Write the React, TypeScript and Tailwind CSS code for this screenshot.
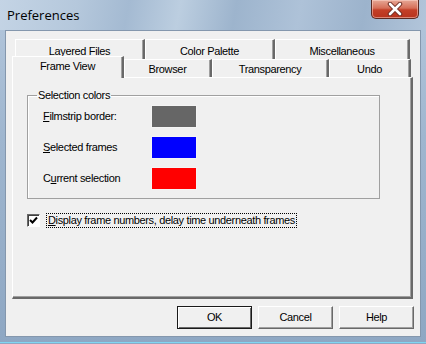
import React from 'react';

const tabBase = 'flex justify-center bg-[#f0f0f0] border-t border-l border-t-white border-l-white border-r-2 border-r-[#696969] shadow-[inset_-1px_0_0_#a0a0a0] text-[11px] tracking-[-0.35px] text-black';

const topTabs = [
  { label: 'Layered Files', w: 'w-[130px]' },
  { label: 'Color Palette', w: 'w-[130px]' },
  { label: 'Miscellaneous', w: 'w-[135px]' }
];

const lowerTabs = [
  { label: 'Browser', w: 'w-[88px]' },
  { label: 'Transparency', w: 'w-[117px]' },
  { label: 'Undo', w: 'w-[82px]' }
];

const colorRows = [
  { key: 'F', rest: 'ilmstrip border:', color: 'bg-[#666666]' },
  { key: 'S', rest: 'elected frames', color: 'bg-[#0000ff]' },
  { key: 'C', rest: 'urrent selection', color: 'bg-[#ff0000]', underlineSecond: true }
];

const Btn: React.FC<{ label: string; isDefault?: boolean }> = ({ label, isDefault }) => (
  <button
    className={`w-[75px] h-[23px] bg-[#f0f0f0] text-[11px] tracking-[-0.35px] text-black flex items-center justify-center border ${
      isDefault ? 'border-[#1a1a1a] shadow-[inset_1px_1px_0_#ffffff,inset_-1px_-1px_0_#696969]' : 'border-t-white border-l-white border-r-[#696969] border-b-[#696969] shadow-[inset_-1px_-1px_0_#a0a0a0]'
    }`}
  >
    {label}
  </button>
);

export default function App() {
  return (
    <div className="w-[426px] h-[344px] flex flex-col overflow-hidden bg-[linear-gradient(180deg,#b4c7dc_0%,#9fb6cf_40%,#8ea7c3_100%)] font-['Liberation_Sans',Arial,sans-serif]">
      {/* title bar */}
      <div className="h-[30px] flex items-start justify-between bg-[linear-gradient(100deg,#c4d4e5_0%,#b5c8dc_18%,#a4bad2_30%,#bccee0_42%,#9db4cd_55%,#aec2d8_70%,#9cb3cc_85%,#b2c5da_100%)]">
        <span className="ml-[7px] mt-[5px] text-[13px] text-black font-['Open_Sans',sans-serif] leading-[20px]">Preferences</span>
        <div className="mr-[7px] w-[48px] h-[19px] rounded-b-[5px] border border-t-0 border-[#5b2a22] bg-[linear-gradient(180deg,#e6a896_0%,#d66f58_45%,#c33f27_55%,#b8331d_100%)] shadow-[inset_0_0_0_1px_rgba(255,220,210,0.5)] flex items-center justify-center">
          <svg width="16" height="14" viewBox="0 0 16 14">
            <path d="M3 2 L13 12 M13 2 L3 12" stroke="#6b2a20" strokeWidth="4.5" strokeLinecap="round" />
            <path d="M3 2 L13 12 M13 2 L3 12" stroke="#ffffff" strokeWidth="2.6" strokeLinecap="round" />
          </svg>
        </div>
      </div>

      {/* client area */}
      <div className="mx-[5px] h-[307px] bg-[#f0f0f0] border border-[#8497ad] flex flex-col">
        <div className="ml-[6px] mt-[8px] w-[401px] flex flex-col">
          {/* top tab row */}
          <div className="flex pl-[3px] h-[20px]">
            {topTabs.map(t => (
              <div key={t.label} className={`${tabBase} ${t.w} h-[20px] pt-[3px]`}>
                {t.label}
              </div>
            ))}
          </div>
          {/* lower tab row */}
          <div className="flex items-end h-[18px]">
            <div className={`${tabBase} relative z-10 w-[112px] h-[22px] mb-[-1px] pt-[1px]`}>Frame View</div>
            {lowerTabs.map(t => (
              <div key={t.label} className={`${tabBase} ${t.w} h-[18px] pt-[1px]`}>
                {t.label}
              </div>
            ))}
          </div>
          {/* panel */}
          <div className="h-[222px] border-t border-l border-white border-r-2 border-b-2 border-r-[#696969] border-b-[#696969] shadow-[inset_-1px_-1px_0_#a0a0a0] flex flex-col">
            <fieldset className="ml-[14px] mt-[11px] w-[353px] border border-[#a0a0a0] shadow-[inset_1px_1px_0_#ffffff] pl-[15px] pb-[8px] pt-[3px]">
              <legend className="ml-[-6px] px-[1px] text-[11px] tracking-[-0.35px] text-black leading-[13px]">Selection colors</legend>
              <div className="grid grid-cols-[108px_46px] gap-y-[8px] items-center">
                {colorRows.map(r => (
                  <React.Fragment key={r.rest}>
                    <span className="text-[11px] tracking-[-0.35px] text-black">
                      {r.underlineSecond ? (
                        <>C<u>u</u>rrent selection</>
                      ) : (
                        <>
                          <u>{r.key}</u>
                          {r.rest}
                        </>
                      )}
                    </span>
                    <div className={`h-[23px] ${r.color} border border-[#f4f4f4]`} />
                  </React.Fragment>
                ))}
              </div>
            </fieldset>

            <div className="ml-[14px] mt-[14px] flex items-center">
              <div className="w-[13px] h-[13px] bg-white border border-t-[#696969] border-l-[#696969] border-r-white border-b-white shadow-[inset_1px_1px_0_#404040] flex items-center justify-center">
                <svg width="9" height="9" viewBox="0 0 9 9">
                  <path d="M1 4 L3.5 6.5 L8 1.5" stroke="#000" strokeWidth="2" fill="none" />
                </svg>
              </div>
              <span className="ml-[6px] px-[1px] border border-dotted border-black text-[11px] tracking-[-0.35px] text-black leading-[13px]">
                <u>D</u>isplay frame numbers, delay time underneath frames
              </span>
            </div>
          </div>
          {/* buttons */}
          <div className="mt-[7px] flex justify-end gap-[6px] w-[402px]">
            <Btn label="OK" isDefault />
            <Btn label="Cancel" />
            <Btn label="Help" />
          </div>
        </div>
      </div>
      <div className="flex-1 flex flex-col justify-end">
        <div className="h-[1px] mb-[1px] bg-[#7fd6f2]" />
      </div>
    </div>
  );
}
